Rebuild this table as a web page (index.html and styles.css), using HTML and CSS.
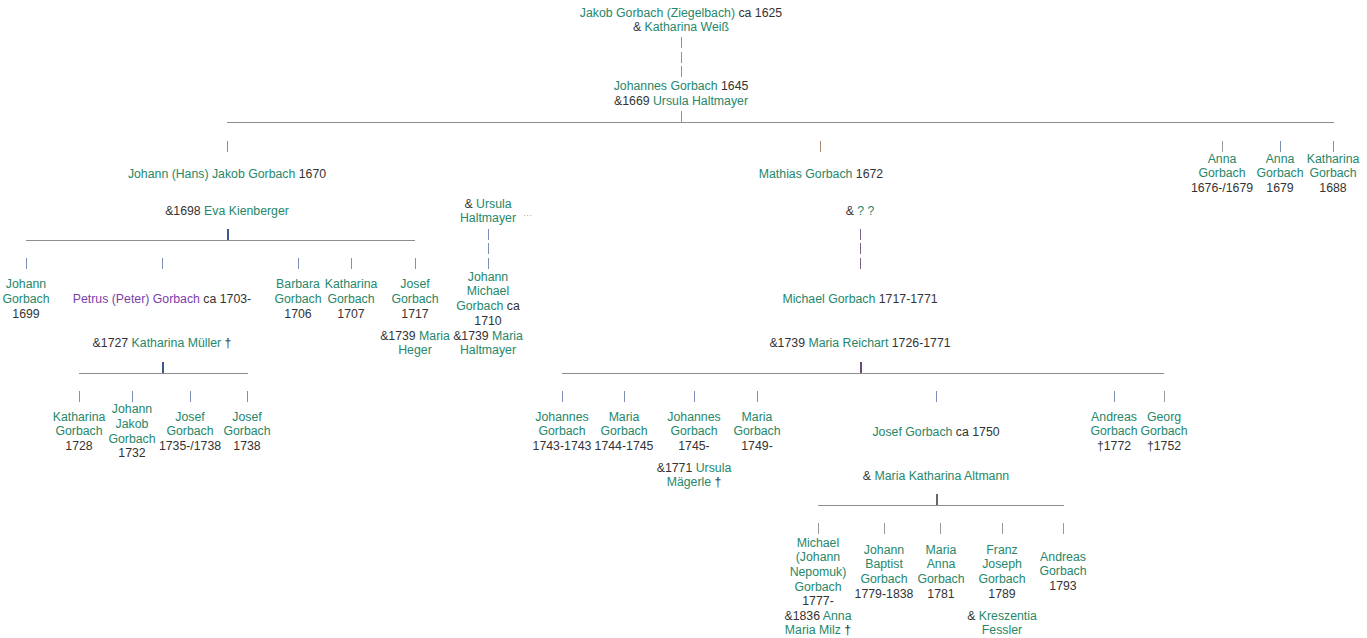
FILE: index.html
```html
<!DOCTYPE html>
<html lang="de">
<head>
<meta charset="utf-8">
<title>Stammbaum Gorbach</title>
<link rel="stylesheet" href="styles.css">
</head>
<body>
<div class="tree">
  <!-- generation 1 -->
  <div class="node n1"><a>Jakob Gorbach (Ziegelbach)</a> ca 1625<br>&amp; <a>Katharina Weiß</a></div>
  <span class="tick tb t1a"></span><span class="tick tb t1b"></span><span class="tick tb t1c"></span>
  <div class="node n2"><a>Johannes Gorbach</a> 1645<br>&amp;1669 <a>Ursula Haltmayer</a></div>
  <span class="tick tb t2"></span>
  <div class="hline h1"></div>

  <!-- generation 3 -->
  <span class="tick tl r2a"></span><span class="tick tb r2b"></span><span class="tick tg r2c"></span><span class="tick tl r2d"></span><span class="tick tb r2e"></span>
  <div class="node n3"><a>Johann (Hans) Jakob Gorbach</a> 1670</div>
  <div class="node n4">&amp;1698 <a>Eva Kienberger</a></div>
  <span class="tick tj j1"></span>
  <div class="hline h2"></div>

  <div class="node n5">&amp; <a>Ursula</a><br><a>Haltmayer</a></div>
  <span class="dots">···</span>
  <span class="tick tl u1"></span><span class="tick tl u2"></span><span class="tick tl u3"></span>
  <div class="node n6"><a>Johann<br>Michael<br>Gorbach</a> ca<br>1710</div>
  <div class="node n6m">&amp;1739 <a>Maria<br>Haltmayer</a></div>

  <span class="tick tl r3a"></span><span class="tick tl r3b"></span><span class="tick tl r3c"></span><span class="tick tb r3d"></span><span class="tick tb r3e"></span>
  <div class="node n7"><a>Johann<br>Gorbach</a><br>1699</div>
  <div class="node n8"><a class="visited">Petrus (Peter) Gorbach</a> ca 1703-</div>
  <div class="node n9"><a>Barbara<br>Gorbach</a><br>1706</div>
  <div class="node n10"><a>Katharina<br>Gorbach</a><br>1707</div>
  <div class="node n11"><a>Josef<br>Gorbach</a><br>1717</div>
  <div class="node n11m">&amp;1739 <a>Maria<br>Heger</a></div>
  <div class="node n12">&amp;1727 <a>Katharina Müller</a> †</div>
  <span class="tick tj j2"></span>
  <div class="hline h3"></div>

  <span class="tick tb r4a"></span><span class="tick tl r4b"></span><span class="tick tl r4c"></span><span class="tick tl r4d"></span>
  <div class="node n13"><a>Katharina<br>Gorbach</a><br>1728</div>
  <div class="node n14"><a>Johann<br>Jakob<br>Gorbach</a><br>1732</div>
  <div class="node n15"><a>Josef<br>Gorbach</a><br>1735-/1738</div>
  <div class="node n16"><a>Josef<br>Gorbach</a><br>1738</div>

  <!-- Mathias branch -->
  <div class="node n17"><a>Mathias Gorbach</a> 1672</div>
  <div class="node n18">&amp; <a>? ?</a></div>
  <span class="tick tp m1"></span><span class="tick tp m2"></span><span class="tick tp m3"></span>
  <div class="node n19"><a>Michael Gorbach</a> 1717-1771</div>
  <div class="node n20">&amp;1739 <a>Maria Reichart</a> 1726-1771</div>
  <span class="tick tjp j3"></span>
  <div class="hline h4"></div>

  <span class="tick tl r5a"></span><span class="tick tl r5b"></span><span class="tick tl r5c"></span><span class="tick tl r5d"></span><span class="tick tl r5e"></span><span class="tick tl r5f"></span><span class="tick tg r5g"></span>
  <div class="node n21"><a>Johannes<br>Gorbach</a><br>1743-1743</div>
  <div class="node n22"><a>Maria<br>Gorbach</a><br>1744-1745</div>
  <div class="node n23"><a>Johannes<br>Gorbach</a><br>1745-</div>
  <div class="node n24"><a>Maria<br>Gorbach</a><br>1749-</div>
  <div class="node n25">&amp;1771 <a>Ursula<br>Mägerle</a> †</div>
  <div class="node n26"><a>Josef Gorbach</a> ca 1750</div>
  <div class="node n27">&amp; <a>Maria Katharina Altmann</a></div>
  <span class="tick tjg j4"></span>
  <div class="hline h5"></div>
  <div class="node n28"><a>Andreas<br>Gorbach</a><br>†1772</div>
  <div class="node n28b"><a>Georg<br>Gorbach</a><br>†1752</div>

  <span class="tick tg r6a"></span><span class="tick tg r6b"></span><span class="tick tg r6c"></span><span class="tick tg r6d"></span><span class="tick tg r6e"></span>
  <div class="node n29"><a>Michael<br>(Johann<br>Nepomuk)<br>Gorbach</a><br>1777-</div>
  <div class="node n30">&amp;1836 <a>Anna<br>Maria Milz</a> †</div>
  <div class="node n31"><a>Johann<br>Baptist<br>Gorbach</a><br>1779-1838</div>
  <div class="node n32"><a>Maria<br>Anna<br>Gorbach</a><br>1781</div>
  <div class="node n33"><a>Franz<br>Joseph<br>Gorbach</a><br>1789</div>
  <div class="node n34">&amp; <a>Kreszentia<br>Fessler</a></div>
  <div class="node n35"><a>Andreas<br>Gorbach</a><br>1793</div>

  <!-- right siblings -->
  <div class="node n36"><a>Anna<br>Gorbach</a><br>1676-/1679</div>
  <div class="node n37"><a>Anna<br>Gorbach</a><br>1679</div>
  <div class="node n38"><a>Katharina<br>Gorbach</a><br>1688</div>
</div>
</body>
</html>
```
FILE: styles.css
```css
html, body {
  margin: 0;
  padding: 0;
  background: #ffffff;
}
body {
  font-family: "Liberation Sans", Arial, sans-serif;
  font-size: 12.3px;
  color: #333333;
}
.tree {
  position: relative;
  width: 1367px;
  height: 638px;
  overflow: hidden;
}
.node {
  position: absolute;
  transform: translateX(-50%);
  text-align: center;
  white-space: nowrap;
  line-height: 14.7px;
}
.node a {
  color: #26876a;
  text-decoration: none;
}
.node a.visited {
  color: #7b3fa8;
}
.dots {
  position: absolute;
  left: 523px;
  top: 210px;
  font-size: 9px;
  color: #a8a8a8;
  letter-spacing: 0;
}
.tick {
  position: absolute;
  width: 1px;
  height: 11px;
  background: #999999;
}
.tb { background: #a98a74; }
.tl { background: #7d90b4; }
.tg { background: #9a9a9a; }
.tp { background: #7c6488; }
.tj { background: #3f5788; width: 1.5px; }
.tjp { background: #6a4a7a; width: 1.5px; }
.tjg { background: #666666; width: 1.5px; }
.hline {
  position: absolute;
  height: 1px;
  background: #8e8e8e;
}
.h1 { left: 227px; width: 1107px; top: 122px; }
.h2 { left: 26px; width: 389px; top: 240px; }
.h3 { left: 79px; width: 169px; top: 373px; }
.h4 { left: 562px; width: 602px; top: 373px; }
.h5 { left: 818px; width: 246px; top: 505px; }

/* ticks */
.t1a { left: 681px; top: 37px; }
.t1b { left: 681px; top: 52px; }
.t1c { left: 681px; top: 66px; }
.t2  { left: 681px; top: 111px; }
.r2a { left: 227px; top: 141px; }
.r2b { left: 820px; top: 141px; }
.r2c { left: 1222px; top: 141px; }
.r2d { left: 1280px; top: 141px; }
.r2e { left: 1333px; top: 141px; }
.j1  { left: 227px; top: 229px; }
.u1  { left: 488px; top: 229px; }
.u2  { left: 488px; top: 243px; }
.u3  { left: 488px; top: 258px; }
.r3a { left: 26px; top: 258px; }
.r3b { left: 162px; top: 258px; }
.r3c { left: 298px; top: 258px; }
.r3d { left: 351px; top: 258px; }
.r3e { left: 415px; top: 258px; }
.j2  { left: 162px; top: 362px; }
.r4a { left: 79px; top: 391px; }
.r4b { left: 132px; top: 391px; }
.r4c { left: 190px; top: 391px; }
.r4d { left: 247px; top: 391px; }
.m1  { left: 860px; top: 229px; }
.m2  { left: 860px; top: 243px; }
.m3  { left: 860px; top: 258px; }
.j3  { left: 860px; top: 362px; }
.r5a { left: 562px; top: 391px; }
.r5b { left: 624px; top: 391px; }
.r5c { left: 694px; top: 391px; }
.r5d { left: 757px; top: 391px; }
.r5e { left: 936px; top: 391px; }
.r5f { left: 1114px; top: 391px; }
.r5g { left: 1164px; top: 391px; }
.j4  { left: 936px; top: 494px; }
.r6a { left: 818px; top: 523px; }
.r6b { left: 884px; top: 523px; }
.r6c { left: 940px; top: 523px; }
.r6d { left: 1002px; top: 523px; }
.r6e { left: 1063px; top: 523px; }

/* nodes: left = centre x, top = first line box */
.n1  { left: 681px; top: 5.6px; }
.n2  { left: 681px; top: 79px; }
.n3  { left: 227px; top: 166.6px; }
.n4  { left: 227px; top: 203.6px; }
.n5  { left: 488px; top: 196.6px; }
.n6  { left: 488px; top: 269.6px; }
.n6m { left: 488px; top: 328.6px; }
.n7  { left: 26px; top: 277.3px; }
.n8  { left: 162px; top: 291.6px; }
.n9  { left: 298px; top: 277.3px; }
.n10 { left: 351px; top: 277.3px; }
.n11 { left: 415px; top: 277.3px; }
.n11m { left: 415px; top: 328.6px; }
.n12 { left: 162px; top: 335.6px; }
.n13 { left: 79px; top: 409.6px; }
.n14 { left: 132px; top: 402.3px; }
.n15 { left: 190px; top: 409.6px; }
.n16 { left: 247px; top: 409.6px; }
.n17 { left: 821px; top: 166.6px; }
.n18 { left: 860px; top: 203.6px; }
.n19 { left: 860px; top: 291.6px; }
.n20 { left: 860px; top: 335.6px; }
.n21 { left: 562px; top: 409.6px; }
.n22 { left: 624px; top: 409.6px; }
.n23 { left: 694px; top: 409.6px; }
.n24 { left: 757px; top: 409.6px; }
.n25 { left: 694px; top: 460.6px; }
.n26 { left: 936px; top: 424.6px; }
.n27 { left: 936px; top: 469px; }
.n28 { left: 1114px; top: 409.6px; }
.n28b { left: 1164px; top: 409.6px; }
.n29 { left: 818px; top: 535.6px; }
.n30 { left: 818px; top: 608.6px; }
.n31 { left: 884px; top: 542.6px; }
.n32 { left: 941px; top: 542.6px; }
.n33 { left: 1002px; top: 542.6px; }
.n34 { left: 1002px; top: 608.6px; }
.n35 { left: 1063px; top: 549.6px; }
.n36 { left: 1222px; top: 151.6px; }
.n37 { left: 1280px; top: 151.6px; }
.n38 { left: 1333px; top: 151.6px; }
```
